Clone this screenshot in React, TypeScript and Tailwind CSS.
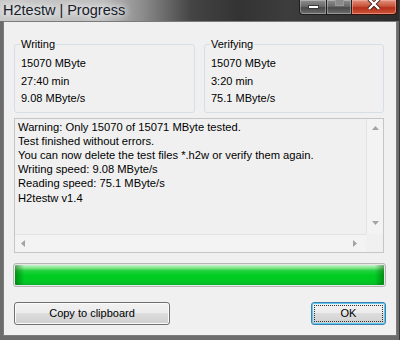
import React from 'react';

type Dir = 'up' | 'down' | 'left' | 'right';

const Arrow: React.FC<{ dir: Dir }> = ({ dir }) => {
  const vertical = dir === 'up' || dir === 'down';
  const points = {
    up: '0,4 3.5,0 7,4',
    down: '0,0 7,0 3.5,4',
    left: '4,0 4,7 0,3.5',
    right: '0,0 0,7 4,3.5',
  }[dir];
  return (
    <svg width={vertical ? 7 : 4} height={vertical ? 4 : 7} viewBox={vertical ? '0 0 7 4' : '0 0 4 7'}>
      <polygon points={points} fill="#a3a3a3" />
    </svg>
  );
};

const GroupBox: React.FC<{ title: string; lines: string[]; className?: string }> = ({ title, lines, className }) => (
  <fieldset className={`border border-[#d5dfe5] rounded-[3px] pl-[5px] ${className ?? ''}`}>
    <legend className="px-[1px] leading-[16px] bg-[#f0f0f0]">{title}</legend>
    <div className="pl-[1px] pt-[3px] pb-[4px] leading-[17.5px]">
      {lines.map((l) => (
        <div key={l}>{l}</div>
      ))}
    </div>
  </fieldset>
);

const log = [
  'Warning: Only 15070 of 15071 MByte tested.',
  'Test finished without errors.',
  'You can now delete the test files *.h2w or verify them again.',
  'Writing speed: 9.08 MByte/s',
  'Reading speed: 75.1 MByte/s',
  'H2testw v1.4',
];

export default function App() {
  return (
    <div className="w-[400px] h-[340px] flex flex-col overflow-hidden bg-[#6c6c6c] border-r border-[#3a3a3a] font-['Liberation_Sans',Arial,sans-serif] text-[11px] text-black">
      {/* title bar */}
      <div className="h-[21px] flex items-start bg-[linear-gradient(90deg,#c9c9c9_0%,#bcbcbc_26%,#8a8a8a_36%,#444444_48%,#333333_60%,#3d3d3d_72%,#2c2c2c_100%)]">
        <span className="ml-[3px] text-[14.5px] leading-[20px] text-[#16202c] [text-shadow:0_0_6px_#ffffff,0_0_10px_#ffffff]">
          H2testw | Progress
        </span>
        <div className="ml-auto mr-[2px] flex h-[15px]">
          <div className="w-[28px] h-full border border-t-0 border-[#1e1e1e] rounded-bl-[4px] bg-[linear-gradient(#8e8e8e,#6a6a6a_45%,#4a4a4a_55%,#6e6e6e)] shadow-[inset_0_0_0_1px_rgba(255,255,255,0.3)] flex justify-center pt-[5px]">
            <div className="w-[11px] h-[4px] bg-white border border-[#3a3a3a]" />
          </div>
          <div className="w-[25px] h-full border border-t-0 border-l-0 border-[#1e1e1e] bg-[linear-gradient(#8e8e8e,#6a6a6a_45%,#4a4a4a_55%,#6e6e6e)] shadow-[inset_0_0_0_1px_rgba(255,255,255,0.3)] flex justify-center">
            <div className="w-[9px] h-[6px] border border-t-0 border-[#9a9a9a] bg-[#8a8a8a]" />
          </div>
          <div className="w-[45px] h-full border border-t-0 border-l-0 border-[#3a1208] rounded-br-[4px] bg-[linear-gradient(#e0927e,#c9533a_45%,#b5301a_55%,#d0563a)] shadow-[inset_0_0_0_1px_rgba(255,200,190,0.45)] flex justify-center">
            <svg width="16" height="10" viewBox="0 0 16 10">
              <path d="M3 -1 L13 9 M13 -1 L3 9" stroke="#3a1a14" strokeWidth="4" />
              <path d="M3 -1 L13 9 M13 -1 L3 9" stroke="#ffffff" strokeWidth="2.4" />
            </svg>
          </div>
        </div>
      </div>

      {/* client area */}
      <div className="flex-1 flex pl-[3px] pr-[2px] pb-[4px]">
        <div className="flex-1 flex flex-col border border-[#7a7a7a] bg-[#f0f0f0] pt-[14px] px-[10px]">
          <div className="flex gap-[9px] mr-[2px]">
            <GroupBox className="w-[181px]" title="Writing" lines={['15070 MByte', '27:40 min', '9.08 MByte/s']} />
            <GroupBox className="flex-1" title="Verifying" lines={['15070 MByte', '3:20 min', '75.1 MByte/s']} />
          </div>

          <div className="mt-[5px] mr-[2px] h-[135px] border border-[#c6c6c6] grid grid-cols-[1fr_17px] grid-rows-[1fr_18px]">
            <div className="pl-[3px] pt-[1px] text-[11.2px] leading-[14.2px] whitespace-nowrap overflow-hidden">
              {log.map((l) => (
                <div key={l}>{l}</div>
              ))}
            </div>
            <div className="border-l border-[#e3e3e3] bg-[#f3f3f3] flex flex-col items-center justify-between pt-[7px] pb-[9px]">
              <Arrow dir="up" />
              <Arrow dir="down" />
            </div>
            <div className="border-t border-[#e3e3e3] bg-[#f3f3f3] flex items-center justify-between pl-[6px] pr-[9px]">
              <Arrow dir="left" />
              <Arrow dir="right" />
            </div>
            <div className="bg-[#f0f0f0]" />
          </div>

          <div className="mt-[10px] -ml-[1px] h-[24px] rounded-[3px] border border-[#b5b5b5] p-[1px] bg-[#e8e8e8]">
            <div className="h-full rounded-[1px] bg-[linear-gradient(90deg,rgba(0,70,0,0.45),rgba(0,70,0,0)_2.5%,rgba(0,70,0,0)_97.5%,rgba(0,70,0,0.45)),linear-gradient(180deg,#c4f5c6_0%,#86e690_14%,#25d240_28%,#00cc22_50%,#00c823_85%,#0bb12a_100%)]" />
          </div>

          <div className="mt-[15px] flex justify-between">
            <button className="w-[156px] h-[23px] rounded-[3px] border border-[#707070] bg-[linear-gradient(#f2f2f2_0%,#ebebeb_50%,#dddddd_50%,#cfcfcf_100%)] shadow-[inset_0_0_0_1px_#fbfbfb]">
              Copy to clipboard
            </button>
            <button className="w-[75px] h-[23px] rounded-[3px] border border-[#3c7fb1] bg-[linear-gradient(#f2f2f2_0%,#ebebeb_50%,#dddddd_50%,#cfcfcf_100%)] shadow-[inset_0_0_0_1px_#5fc8ef] p-[2px]">
              <div className="h-full flex items-center justify-center border border-dotted border-[#333333]">OK</div>
            </button>
          </div>
        </div>
      </div>
    </div>
  );
}
